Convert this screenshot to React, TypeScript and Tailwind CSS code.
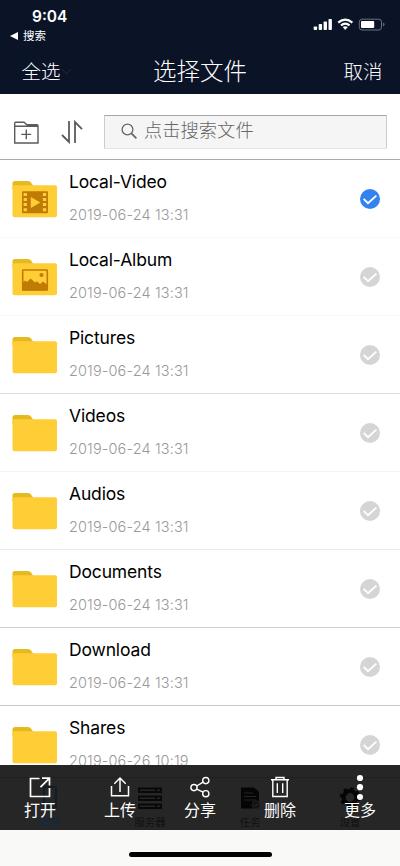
import type { ReactNode } from "react";

const files = [
  { name: "Local-Video", date: "2019-06-24 13:31", type: "video", selected: true, border: "border-[#f8f8f8]" },
  { name: "Local-Album", date: "2019-06-24 13:31", type: "album", selected: false, border: "border-[#f8f8f8]" },
  { name: "Pictures", date: "2019-06-24 13:31", type: "folder", selected: false, border: "border-[#dedede]" },
  { name: "Videos", date: "2019-06-24 13:31", type: "folder", selected: false, border: "border-[#f4f4f4]" },
  { name: "Audios", date: "2019-06-24 13:31", type: "folder", selected: false, border: "border-[#e9e9e9]" },
  { name: "Documents", date: "2019-06-24 13:31", type: "folder", selected: false, border: "border-[#d0d0d0]" },
  { name: "Download", date: "2019-06-24 13:31", type: "folder", selected: false, border: "border-[#c8c8c8]" },
  { name: "Shares", date: "2019-06-26 10:19", type: "folder", selected: false, border: "border-[#c8c8c8]" },
];

function FolderIcon({ type }: { type: string }) {
  return (
    <svg width="46" height="38" viewBox="0 0 46 38" className="shrink-0">
      <path d="M.5 10V3.5Q.5 1 3 1H16Q18 1 19 2.5L21 5.5V10Z" fill="#e6b91e" />
      <rect x=".5" y="5.2" width="44.5" height="32" rx="2" fill="#ffcd36" />
      {type === "video" && (
        <>
          <rect x="10" y="11.2" width="26" height="22" rx="1" fill="#c07b05" />
          <path d="M11.6 13h3.3v3h-3.3zM11.6 18h3.3v3h-3.3zM11.6 23h3.3v3h-3.3zM11.6 28.2h3.3v3h-3.3zM30.9 13h3.3v3h-3.3zM30.9 18h3.3v3h-3.3zM30.9 23h3.3v3h-3.3zM30.9 28.2h3.3v3h-3.3z" fill="#ffcd36" />
          <path d="M18.8 17V28L28.3 22.5Z" fill="#ffcd36" />
        </>
      )}
      {type === "album" && (
        <>
          <rect x="10.7" y="12" width="24.6" height="20" rx=".5" fill="none" stroke="#c07b05" strokeWidth="1.6" />
          <circle cx="29.5" cy="17" r="2.1" fill="#c07b05" />
          <path d="M10 25.5L13 22.5L15 24L18.5 20.5L23 24.5L25 23.2L28 26L31 23.5L35.5 27V32.5H10Z" fill="#c07b05" />
        </>
      )}
    </svg>
  );
}

function CheckMark({ selected }: { selected: boolean }) {
  return (
    <svg width="20" height="20" viewBox="0 0 20 20">
      <circle cx="10" cy="10" r="10" fill={selected ? "#3282ef" : "#d5d5d5"} />
      <path d="M3.6 9.8L8 14.2L16.4 6.6" fill="none" stroke="#fff" strokeWidth="1.9" />
    </svg>
  );
}

function StatusBar() {
  return (
    <div className="flex h-[46px] justify-between">
      <div>
        <div className="pl-8 pt-[7px] text-[15.5px] leading-5 font-semibold">9:04</div>
        <div className="mt-[1px] flex items-center gap-[5px] pl-[10px] text-[11.5px] leading-4">
          <svg width="8" height="8" viewBox="0 0 8 8" fill="#fff"><path d="M0 4L8 0V8Z" /></svg>
          <span>搜索</span>
        </div>
      </div>
      <svg width="74" height="16" viewBox="0 0 74 16" className="mt-4 mr-[13px]">
        <g fill="#fff">
          <rect x=".7" y="10.4" width="3.4" height="3.7" rx=".8" />
          <rect x="5.7" y="8" width="3.4" height="6.1" rx=".8" />
          <rect x="10.6" y="5.4" width="3.4" height="8.7" rx=".8" />
          <rect x="15.5" y="3" width="3.4" height="11.1" rx=".8" />
          <path d="M29.7 11.1Q32.2 9.2 34.8 11.1L32.2 14Z" />
          <rect x="48" y="5" width="13.2" height="7" rx="1" />
          <path d="M70.2 6.6Q73 8.4 70.2 10.4Z" fill="#777e88" />
        </g>
        <path d="M25.2 6.6Q32.2 .5 39.4 6.6M28 9.4Q32.2 5.7 36.6 9.4" stroke="#fff" strokeWidth="2.1" fill="none" />
        <rect x="46.3" y="3.2" width="22.2" height="10.8" rx="2.7" fill="none" stroke="#6a717c" />
      </svg>
    </div>
  );
}

function Action({ label, children }: { label: string; children: ReactNode }) {
  return (
    <button className="flex w-20 flex-col items-center text-[16px] leading-5 text-white">
      <svg width="26" height="28" viewBox="0 0 26 28" fill="none" stroke="currentColor" strokeWidth="1.4">
        {children}
      </svg>
      <span>{label}</span>
    </button>
  );
}

// The tab bar stays faintly visible under the action sheet
function DimmedTabs() {
  return (
    <div className="absolute inset-x-0 top-3 flex h-[53px] border-t border-[#202020] text-[10.5px] leading-3 text-[#111]">
      <div className="flex w-[100px] flex-col items-center text-[#0c2b48]">
        <svg width="28" height="39" viewBox="0 0 28 39" fill="none" stroke="#101d2a" strokeWidth="2">
          <rect x="8" y="9" width="12" height="20" rx="1" />
        </svg>
        <span>本机</span>
      </div>
      <div className="flex w-[100px] flex-col items-center">
        <svg width="28" height="39" viewBox="0 0 28 39" fill="none" stroke="#080808" strokeWidth="1.8">
          <path d="M3 10.5H25V14H3ZM3 18.5H25V22H3ZM3 26.5H25V30H3ZM20 10v4M20 18v4M20 26v4" />
        </svg>
        <span>服务器</span>
      </div>
      <div className="flex w-[100px] flex-col items-center">
        <svg width="28" height="39" viewBox="0 0 28 39" fill="none">
          <path d="M5 9.5H18L23 14V30.5H5Z" fill="#050505" />
          <path d="M8 15H17M8 18.5H20M8 22H20" stroke="#252525" />
          <circle cx="20" cy="26.8" r="4" fill="#111" stroke="#222" />
          <path d="M18 26.8L19.5 28.3L22 25.5" stroke="#303030" />
        </svg>
        <span>任务</span>
      </div>
      <div className="flex w-[100px] flex-col items-center">
        <svg width="28" height="39" viewBox="0 0 28 39" fill="none" stroke="#050505">
          <circle cx="14" cy="19.5" r="6.4" strokeWidth="4" />
          <circle cx="14" cy="19.5" r="8.8" strokeWidth="3" strokeDasharray="3.45 3.45" />
        </svg>
        <span>设置</span>
      </div>
    </div>
  );
}

export default function App() {
  return (
    <div className="flex h-[866px] w-[400px] flex-col overflow-hidden bg-white font-[Inter,'Noto_Sans_CJK_SC',sans-serif]">
      <header className="h-[94px] shrink-0 bg-[#0b1327] text-white">
        <StatusBar />
        <div className="grid grid-cols-[100px_200px_100px] items-center pt-[1px] font-light">
          <div className="flex items-center pl-[21.5px] text-[19.5px] leading-[50px]">
            全选
            <svg width="11" height="8" viewBox="0 0 11 8" fill="none" stroke="#252a36"><path d="M1 1L5.5 6L10 1" /></svg>
          </div>
          <h1 className="text-center text-[23.5px] leading-[50px] font-light">选择文件</h1>
          <div className="pr-[17.5px] text-right text-[19.5px] leading-[50px]">取消</div>
        </div>
      </header>

      <div className="flex h-[66px] shrink-0 items-center border-b border-[#aaa] pt-[11px] pl-[13.5px]">
        <svg width="25" height="24" viewBox="0 0 25 24" fill="none" stroke="#5b5b5b" strokeWidth="1.4" className="mt-[1px]">
          <path d="M.7 4.5V2Q.7 1.2 1.5 1.2H10L13 3.7H23Q24 3.7 24 4.7V22H.7ZM.7 5.3H24M12.3 8.5V18.2M7.3 13.4H17.2" />
        </svg>
        <svg width="22" height="24" viewBox="0 0 22 24" fill="none" stroke="#5b5b5b" strokeWidth="1.8" className="ml-[22.5px]">
          <path d="M1 15L8 22V1M14 23V2L21 9.2" />
        </svg>
        <div className="ml-[21px] flex h-[34px] w-[283px] items-center rounded-[1px] border border-t-[#a5a5a5] border-r-[#ccc] border-b-[#e5e5e5] border-l-[#ccc] bg-[#f5f5f5] pl-4 text-[18.3px] font-light text-[#666]">
          <svg width="16" height="16" viewBox="0 0 16 16" fill="none" stroke="currentColor" strokeWidth="1.3" className="-mt-[2px]">
            <circle cx="6.5" cy="6.5" r="5.4" />
            <path d="M10.4 10.4L15.4 15.4" strokeWidth="1.7" />
          </svg>
          <span className="-mt-[2px] ml-[7px]">点击搜索文件</span>
        </div>
      </div>

      <main className="h-[605px] shrink-0 overflow-hidden">
        {files.map((file) => (
          <div key={file.name} className={`flex h-[78px] border-b pr-5 ${file.border}`}>
            <div className="pt-[20px] pl-[11.5px]">
              <FolderIcon type={file.type} />
            </div>
            <div className="ml-[11.5px] flex-1">
              <div className="pt-[10px] text-[17.5px] leading-6 tracking-[-0.15px] text-black">{file.name}</div>
              <div className="pt-[11px] text-[14.5px] leading-5 font-light tracking-[0.13px] text-[#999]">{file.date}</div>
            </div>
            <div className="pt-[29px]">
              <CheckMark selected={file.selected} />
            </div>
          </div>
        ))}
      </main>

      <nav className="relative h-[65px] shrink-0 bg-[#262626]">
        <DimmedTabs />
        <div className="relative flex pt-[7px]">
          <Action label="打开">
            <path d="M12.5 6.5H3.5V24.5H22.5V16M15 6.2H22.5V13.5M22 6.7L13.5 15.2" strokeWidth="1.7" />
          </Action>
          <Action label="上传">
            <path d="M4.5 14V23.8H21.5V14M13 20V6M7.3 11.7L13 6L18.7 11.7" strokeWidth="1.5" />
          </Action>
          <Action label="分享">
            <circle cx="7" cy="15.6" r="3.1" />
            <circle cx="18.8" cy="8.6" r="3.1" />
            <circle cx="18.8" cy="21.7" r="3.1" />
            <path d="M9.7 14L16.1 10.2M9.7 17.1L16.1 20.2" />
          </Action>
          <Action label="删除">
            <path d="M4 7.8H22M9 7.5V5.5H17V7.5M5.8 8V24.5H20.2V8M10.3 11.3V21M15.7 11.3V21" />
          </Action>
          <Action label="更多">
            <g fill="#fff" stroke="none">
              <circle cx="13" cy="6" r="3.1" />
              <circle cx="13" cy="15.2" r="3.1" />
              <circle cx="13" cy="25" r="3" />
            </g>
          </Action>
        </div>
      </nav>
      <div className="flex flex-1 justify-center bg-[#f9f9f7] pt-[22px]">
        <div className="h-[5px] w-[143px] rounded-full bg-black" />
      </div>
    </div>
  );
}
